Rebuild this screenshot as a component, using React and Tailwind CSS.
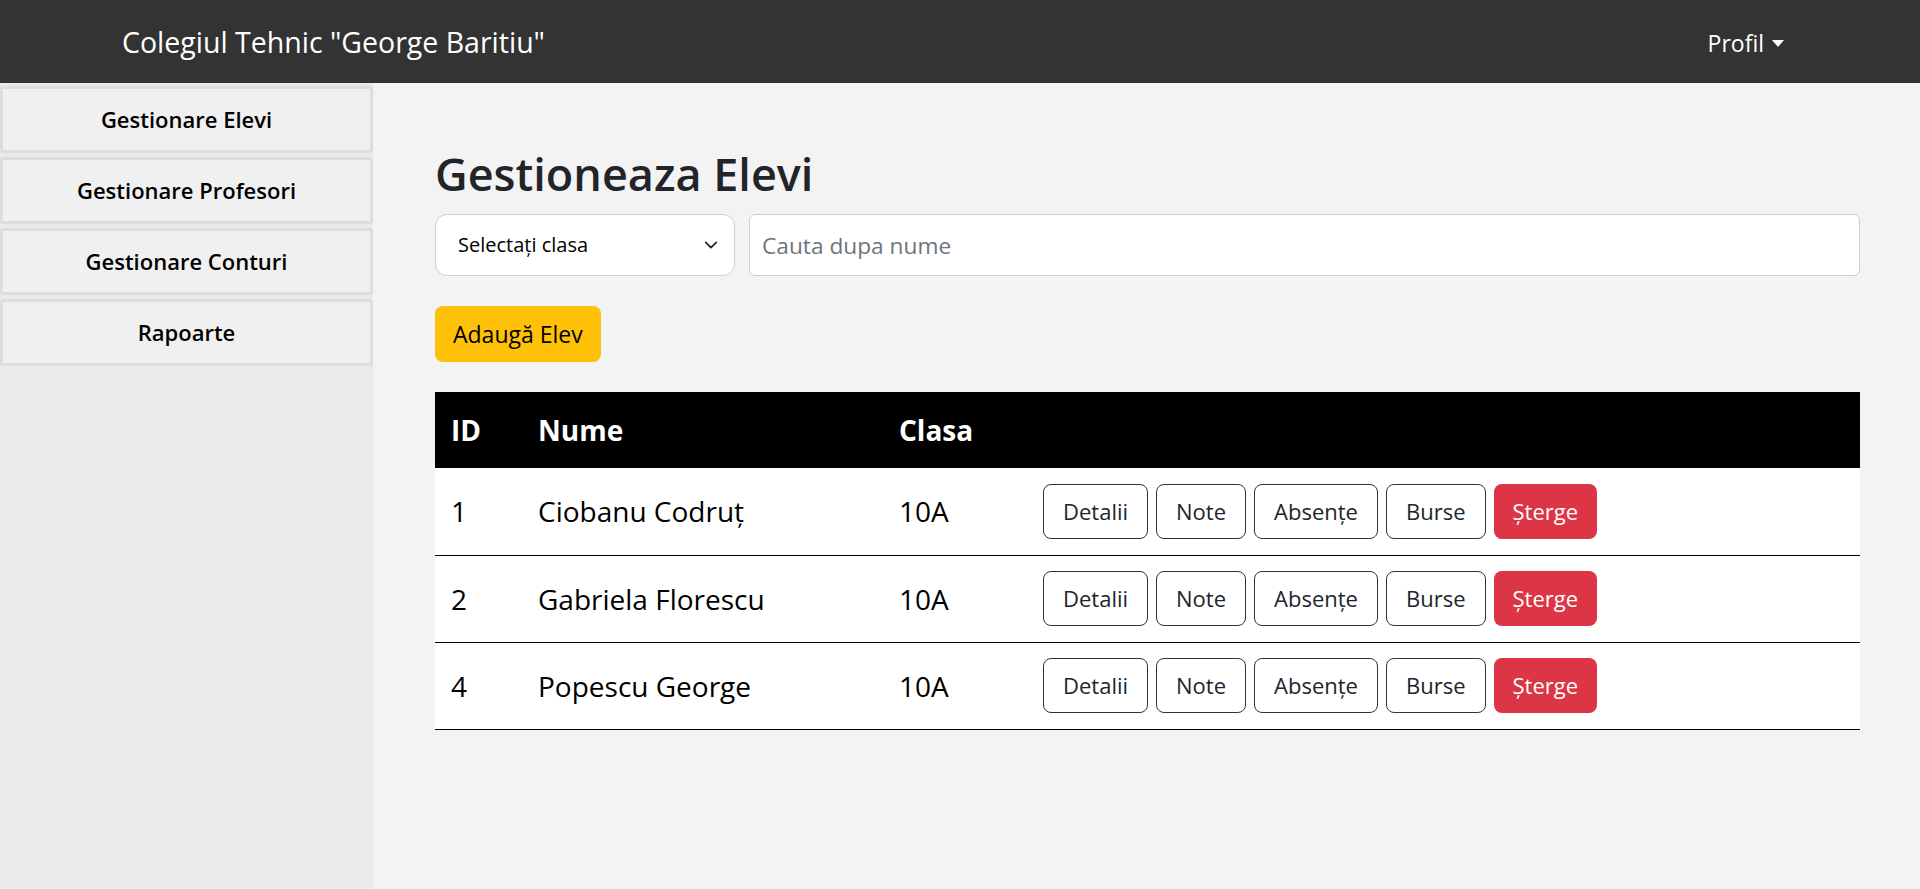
import React from 'react';

const elevi = [
  { id: 1, nume: 'Ciobanu Codruț', clasa: '10A' },
  { id: 2, nume: 'Gabriela Florescu', clasa: '10A' },
  { id: 4, nume: 'Popescu George', clasa: '10A' },
];

const meniu = ['Gestionare Elevi', 'Gestionare Profesori', 'Gestionare Conturi', 'Rapoarte'];

const actiuni = ['Detalii', 'Note', 'Absențe', 'Burse'];

const App = () => {
  return (
    <div className="min-h-screen bg-[#f3f3f3] text-[#212529] font-['Open_Sans',sans-serif]">
      <header className="h-[83px] bg-[#333333] flex items-center justify-between pl-[122px] pr-[136px]">
        <span className="text-white text-[28.5px] leading-none mt-[2px]">Colegiul Tehnic "George Baritiu"</span>
        <button className="flex items-center gap-[8px] text-white text-[23px] mt-[3px]">
          Profil
          <span className="w-0 h-0 border-l-[6px] border-r-[6px] border-t-[7px] border-l-transparent border-r-transparent border-t-white" />
        </button>
      </header>

      <div className="flex">
        <aside className="w-[373px] min-h-[806px] bg-[#eaeaea] pt-[3px] flex flex-col gap-[4px]">
          {meniu.map((item) => (
            <button
              key={item}
              className="h-[67px] w-full bg-[#f0f0f0] border-[3px] border-[#e0dcdc] rounded-[3px] text-[22px] font-semibold text-black"
            >
              {item}
            </button>
          ))}
        </aside>

        <main className="flex-1 pl-[62px] pr-[60px] pt-[64px]">
          <h1 className="text-[45px] font-semibold leading-[1.2]">Gestioneaza Elevi</h1>

          <div className="flex gap-[14px] mt-[13px]">
            <div className="w-[300px] h-[62px] bg-white border border-[#cfcfcf] rounded-[12px] flex items-center justify-between pl-[22px] pr-[16px]">
              <span className="text-[20px] text-black">Selectați clasa</span>
              <svg width="14" height="14" viewBox="0 0 16 16" fill="none" stroke="#222" strokeWidth="2" strokeLinecap="round" strokeLinejoin="round">
                <path d="M2 5l6 6 6-6" />
              </svg>
            </div>
            <input
              className="flex-1 h-[62px] bg-white border border-[#cfcfcf] rounded-[6px] px-[12px] text-[22.7px] placeholder:text-[#6c757d] outline-none"
              placeholder="Cauta dupa nume"
            />
          </div>

          <button className="mt-[30px] h-[56px] px-[18px] bg-[#ffc107] rounded-[8px] text-[23px] text-black">
            Adaugă Elev
          </button>

          <table className="w-full mt-[30px] border-collapse">
            <thead>
              <tr className="bg-black text-white h-[76px]">
                <th className="w-[87px] pl-[16px] text-left text-[28px] font-bold">ID</th>
                <th className="w-[361px] pl-[16px] text-left text-[28px] font-bold">Nume</th>
                <th className="w-[144px] pl-[16px] text-left text-[28px] font-bold">Clasa</th>
                <th />
              </tr>
            </thead>
            <tbody>
              {elevi.map((e) => (
                <tr key={e.id} className="bg-white border-b border-black h-[87px] text-[28px] text-black">
                  <td className="pl-[16px]">{e.id}</td>
                  <td className="pl-[16px]">{e.nume}</td>
                  <td className="pl-[16px]">{e.clasa}</td>
                  <td className="pl-[16px]">
                    <div className="flex gap-[8px]">
                      {actiuni.map((a) => (
                        <button
                          key={a}
                          className="h-[55px] px-[19px] border border-[#333] rounded-[8px] bg-white text-[22px] text-[#212529]"
                        >
                          {a}
                        </button>
                      ))}
                      <button className="h-[55px] px-[19px] rounded-[8px] bg-[#dc3545] text-[22px] text-white">
                        Șterge
                      </button>
                    </div>
                  </td>
                </tr>
              ))}
            </tbody>
          </table>
        </main>
      </div>
    </div>
  );
};

export default App;
